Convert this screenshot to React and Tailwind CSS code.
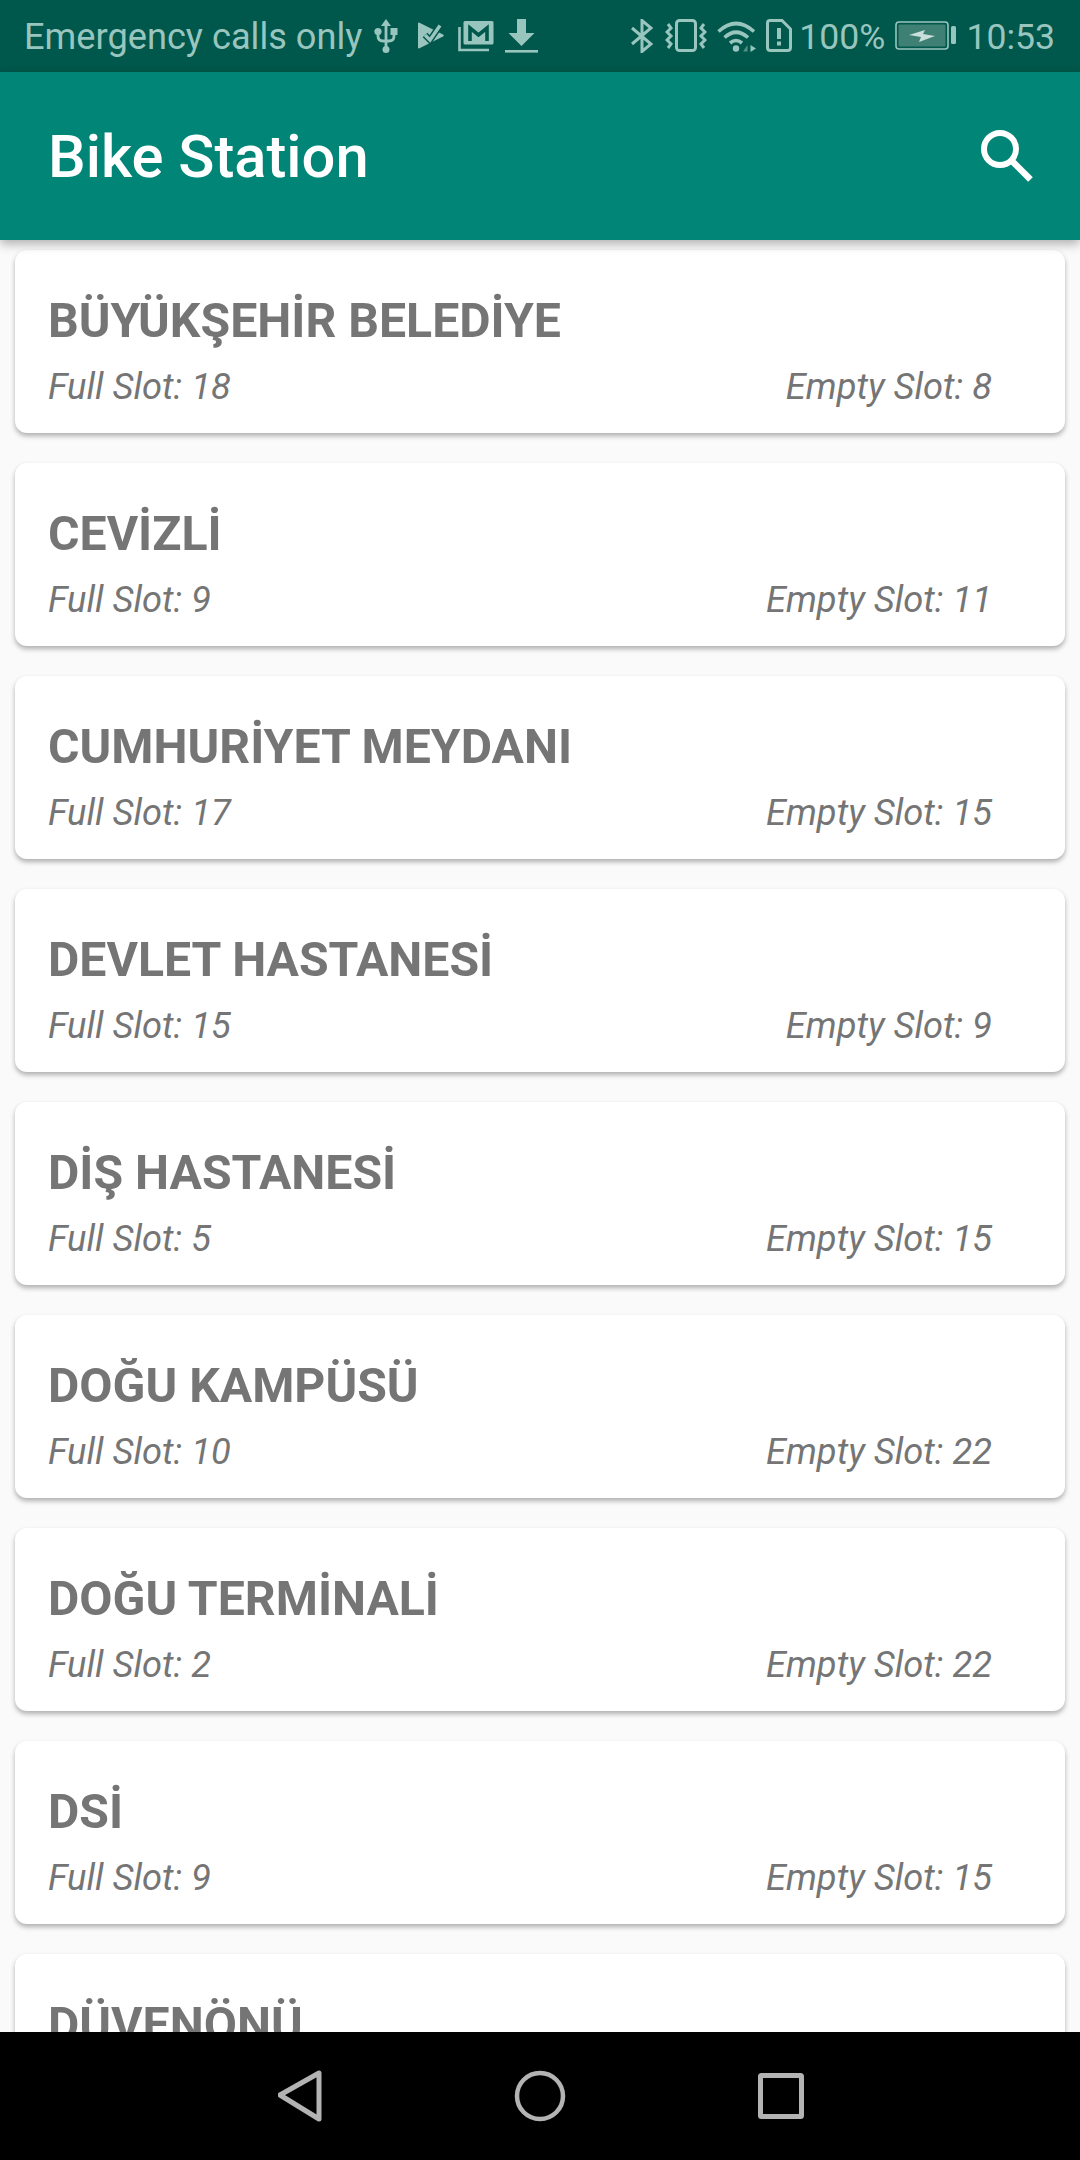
import React from "react";

const stations = [
  { name: "BÜYÜKŞEHİR BELEDİYE", full: 18, empty: 8 },
  { name: "CEVİZLİ", full: 9, empty: 11 },
  { name: "CUMHURİYET MEYDANI", full: 17, empty: 15 },
  { name: "DEVLET HASTANESİ", full: 15, empty: 9 },
  { name: "DİŞ HASTANESİ", full: 5, empty: 15 },
  { name: "DOĞU KAMPÜSÜ", full: 10, empty: 22 },
  { name: "DOĞU TERMİNALİ", full: 2, empty: 22 },
  { name: "DSİ", full: 9, empty: 15 },
  { name: "DÜVENÖNÜ", full: 12, empty: 10 },
];

const UsbIcon = () => (
  <svg width="24" height="34" viewBox="0 0 24 34" fill="none" stroke="#99c5bf" strokeWidth="2.8">
    <path d="M12 5V30M4 14V17Q4 22 9 22H15Q20 22 20 17V13" />
    <path d="M12 0L17 7H7Z" fill="#99c5bf" stroke="none" />
    <circle cx="12" cy="30.5" r="3.5" fill="#99c5bf" stroke="none" />
    <circle cx="4" cy="12.5" r="3.6" fill="#99c5bf" stroke="none" />
    <rect x="16.5" y="9" width="7" height="7" fill="#99c5bf" stroke="none" />
  </svg>
);

const PlayCheckIcon = () => (
  <svg width="26" height="27" viewBox="0 0 26 27" fill="none">
    <path d="M0 1.5Q0 0 1.5 .7L25 12.5Q26.5 13.5 25 14.5L1.5 26.3Q0 27 0 25.5Z" fill="#99c5bf" />
    <path d="M7 13L12 18L23 2" stroke="#00574b" strokeWidth="6.5" />
    <path d="M7 13L12 18L22 3.5" stroke="#99c5bf" strokeWidth="3.4" />
  </svg>
);

const MailStackIcon = () => (
  <svg width="36" height="32" viewBox="0 0 36 32" fill="none">
    <path d="M1.5 7V30H31" stroke="#99c5bf" strokeWidth="2.6" />
    <rect x="5.5" y="1" width="30" height="23.5" rx="1.5" fill="#99c5bf" />
    <path d="M12 21V8L20.5 15L29 8V21" stroke="#00574b" strokeWidth="3.6" />
  </svg>
);

const DownloadIcon = () => (
  <svg width="33" height="34" viewBox="0 0 33 34" fill="#99c5bf">
    <path d="M12 0H21V14H29.5L16.5 27L3.5 14H12Z" />
    <rect x="0" y="31" width="33" height="2.6" />
  </svg>
);

const BluetoothIcon = () => (
  <svg width="22" height="34" viewBox="0 0 22 34" fill="none" stroke="#99c5bf" strokeWidth="3">
    <path d="M1 9L20 25L11 32.5V1.5L20 9L1 25" />
  </svg>
);

const VibrateIcon = () => (
  <svg width="42" height="33" viewBox="0 0 42 33" fill="none" stroke="#99c5bf" strokeWidth="3">
    <rect x="11.5" y="1.5" width="19" height="30" rx="3" />
    <path d="M3 5L6 9L2 13L6 17L2 21L6 25L3 29" />
    <path d="M39 5L36 9L40 13L36 17L40 21L36 25L39 29" />
  </svg>
);

const WifiIcon = () => (
  <svg width="39" height="32" viewBox="0 0 39 32" fill="none" stroke="#99c5bf" strokeWidth="3.6">
    <path d="M1.5 11.5Q19 -4.5 37 11.5" />
    <path d="M7.5 17.5Q19 7 31 17.5" />
    <path d="M13 23Q19 18 25 23" />
    <circle cx="19" cy="28.5" r="3.2" fill="#99c5bf" stroke="none" />
    <path d="M26 31.5L30.5 25V31.5Z" fill="#99c5bf" opacity=".55" stroke="none" />
    <path d="M33.5 25L39 28.5L33.5 32Z" fill="#99c5bf" stroke="none" />
  </svg>
);

const SimAlertIcon = () => (
  <svg width="26" height="33" viewBox="0 0 26 33">
    <path d="M4 1.5H16L24.5 10V28.5Q24.5 31.5 21.5 31.5H4.5Q1.5 31.5 1.5 28.5V4Q1.5 1.5 4 1.5Z" fill="none" stroke="#99c5bf" strokeWidth="3" />
    <rect x="11" y="9" width="4" height="11" fill="#99c5bf" />
    <rect x="11" y="22.5" width="4" height="4" fill="#99c5bf" />
  </svg>
);

const BatteryIcon = () => (
  <svg width="61" height="29" viewBox="0 0 61 29">
    <rect x="1" y="1" width="52" height="27" rx="3" fill="none" stroke="#99c5bf" strokeWidth="1.6" />
    <rect x="3.5" y="3.5" width="47" height="22" rx="1" fill="#3f8074" />
    <rect x="56" y="5" width="5" height="18" rx="1.5" fill="#99c5bf" />
    <path d="M14 14L30 9L28 13L40 15L24 21L26 16Z" fill="#c8dfdb" />
  </svg>
);

const SearchIcon = () => (
  <svg width="52" height="52" viewBox="0 0 52 52" fill="none" stroke="#ffffff">
    <circle cx="19" cy="19" r="16" strokeWidth="6" />
    <path d="M30 30L49.5 49.5" strokeWidth="6.5" />
  </svg>
);

const StationCard = ({ station }) => (
  <div className="h-[183px] shrink-0 rounded-[12px] bg-white pl-[33px] pr-[73px] pt-[43px] shadow-[0_3px_5px_rgba(0,0,0,0.3)]">
    <h2 className="text-[48.2px] font-bold leading-[56px] text-[#757575]">{station.name}</h2>
    <div className="mt-[16px] flex items-center justify-between text-[36.3px] italic leading-[44px] text-[#757575]">
      <span>Full Slot: {station.full}</span>
      <span>Empty Slot: {station.empty}</span>
    </div>
  </div>
);

export default function App() {
  return (
    <div className="flex h-[2160px] w-[1080px] flex-col overflow-hidden bg-[#fafafa] font-['Roboto',sans-serif]">
      {/* Status bar */}
      <div className="flex h-[72px] shrink-0 items-center justify-between bg-[#00574b] pl-[24px] pr-[25px] text-[#99c5bf]">
        <div className="flex items-center">
          <span className="pt-[3px] text-[36.2px]">Emergency calls only</span>
          <span className="ml-[12px]">
            <UsbIcon />
          </span>
          <span className="ml-[20px]">
            <PlayCheckIcon />
          </span>
          <span className="ml-[14px]">
            <MailStackIcon />
          </span>
          <span className="ml-[11px]">
            <DownloadIcon />
          </span>
        </div>
        <div className="flex items-center text-[35.6px]">
          <BluetoothIcon />
          <span className="ml-[12px]">
            <VibrateIcon />
          </span>
          <span className="ml-[10px]">
            <WifiIcon />
          </span>
          <span className="ml-[10px]">
            <SimAlertIcon />
          </span>
          <span className="ml-[7px] pt-[3px]">100%</span>
          <span className="ml-[10px]">
            <BatteryIcon />
          </span>
          <span className="ml-[10px] pt-[3px]">10:53</span>
        </div>
      </div>

      {/* App bar */}
      <header className="z-10 flex h-[168px] shrink-0 items-center justify-between bg-[#008577] pl-[48px] pr-[47px] shadow-[0_4px_10px_rgba(0,0,0,0.3)]">
        <h1 className="pt-[4px] text-[59.7px] font-medium text-white">Bike Station</h1>
        <SearchIcon />
      </header>

      {/* Station list */}
      <main className="flex flex-1 flex-col gap-[30px] overflow-hidden px-[15px] pt-[10px]">
        {stations.map((station) => (
          <StationCard key={station.name} station={station} />
        ))}
      </main>

      {/* Navigation bar */}
      <nav className="flex h-[128px] shrink-0 items-center justify-center gap-[192px] bg-black pl-[2px]">
        <svg width="44" height="52" viewBox="1 0 44 52" fill="none" stroke="#b3b3b3" strokeWidth="5" strokeLinejoin="round">
          <path d="M42 3V49L3 25Z" />
        </svg>
        <svg width="52" height="52" viewBox="0 0 52 52" fill="none" stroke="#b3b3b3" strokeWidth="4.5">
          <circle cx="26" cy="26" r="23" />
        </svg>
        <svg width="46" height="46" viewBox="0 0 46 46" fill="none" stroke="#b3b3b3" strokeWidth="5" strokeLinejoin="round">
          <rect x="2.5" y="2.5" width="41" height="41" rx="1" />
        </svg>
      </nav>
    </div>
  );
}
